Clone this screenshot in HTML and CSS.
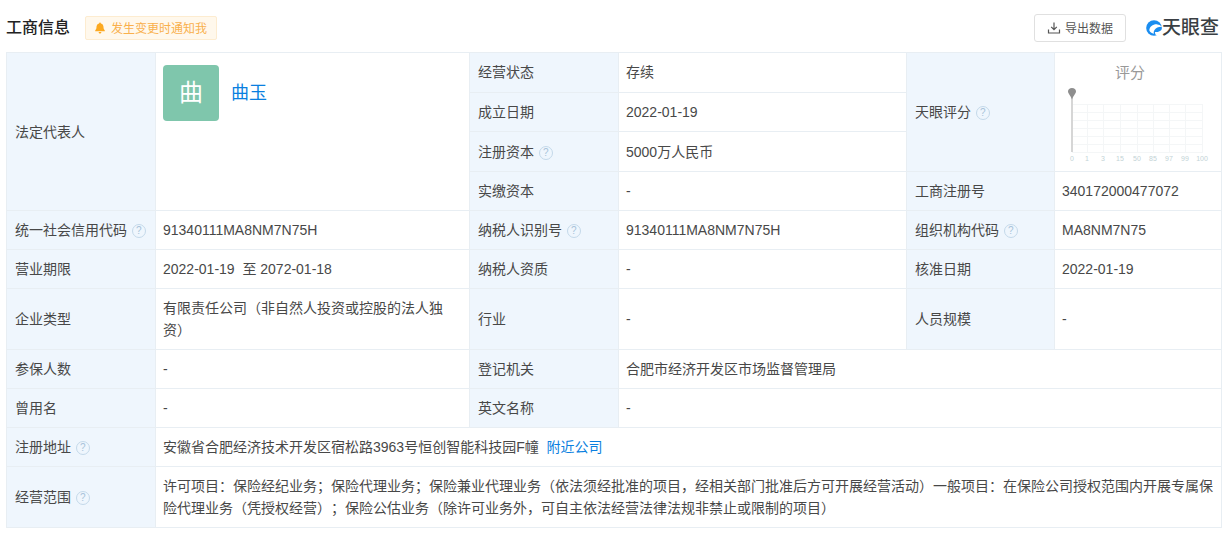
FILE: index.html
```html
<!DOCTYPE html>
<html lang="zh">
<head>
<meta charset="utf-8">
<title>工商信息</title>
<link rel="stylesheet" href="styles.css">
</head>
<body>
<header class="head">
  <h2 class="title">工商信息</h2>
  <div class="notice">
    <svg class="bell" viewBox="0 0 12 12"><path d="M6 .5c.6 0 .9.3.9.9 1.800.4 2.600 1.900 2.600 3.700 0 1.700.6 2.700 1.300 3.300v.9H1.200v-.9c.7-.6 1.300-1.600 1.300-3.300 0-1.800.8-3.300 2.600-3.700 0-.6.3-.9.9-.9zM4.600 10h2.800c0 .9-.6 1.500-1.400 1.500S4.600 10.900 4.600 10z"/></svg>
    <span>发生变更时通知我</span>
  </div>
  <div class="spacer"></div>
  <button class="export">
    <svg class="dl" viewBox="0 0 14 14"><path d="M7 1.500v7M4.200 5.800 7 8.600l2.800-2.800M1.500 8.500v3.500h11V8.500" fill="none" stroke="#555" stroke-width="1.200"/></svg>
    <span>导出数据</span>
  </button>
  <div class="logo">
    <svg class="logo-mark" viewBox="0 0 18 18">
      <circle cx="8.500" cy="9" r="8.300" fill="#1a8df0"/>
      <path d="M3.500 11.500C3.800 7.500 7.500 4.800 12 5.200c1.700.2 3.300.9 4.500 1.900L18 8c-3.500-.8-7 .5-9 3.200-.8 1.200-1.200 2.800-.5 4-2.500-.4-4.500-1.700-5-3.700z" fill="#fff"/>
      <path d="M9.500 13.200c2.500.6 5.300-.4 8.500-3.400v3.800c-2 2.600-4 3.800-6 3.800-1.700-.6-2.600-2.300-2.500-4.200z" fill="#fff"/>
    </svg>
    <span class="logo-text">天眼查</span>
  </div>
</header>
<table class="info">
  <colgroup>
    <col class="c1"><col class="c2"><col class="c3"><col class="c4"><col class="c5"><col class="c6">
  </colgroup>
  <tbody>
    <tr class="r40 first">
      <th rowspan="4">法定代表人</th>
      <td rowspan="4" class="boss-cell">
        <div class="boss"><div class="avatar">曲</div><a class="boss-name">曲玉</a></div>
      </td>
      <th class="up">经营状态</th><td class="up">存续</td>
      <th rowspan="3">天眼评分 <i class="q">?</i></th>
      <td rowspan="3" class="score">
        <div class="score-title">评分</div>
        <svg class="chart" viewBox="0 0 146 76">
          <g stroke="#f4f6f7" stroke-width="1" fill="none">
            <path d="M3 17.500H134M3 25.500H134M3 33.500H134M3 41.500H134M3 49.500H134M3 57.500H134M3 65.500H134"/>
            <path d="M18.500 17V66M34.500 17V66M51.500 17V66M68.500 17V66M84.500 17V66M100.500 17V66M116.500 17V66M133.500 17V66"/>
          </g>
          <rect x="2" y="10" width="2" height="55" fill="#d6d6d6"/>
          <path d="M3 1c2.300 0 4 1.500 4 3.500S4.500 8.500 3 12.500C1.500 8.500-1 6.500-1 4.500S.7 1 3 1z" fill="#8e8e8e"/>
          <g class="ticks">
            <text x="3" y="74">0</text><text x="18" y="74">1</text><text x="34" y="74">3</text><text x="51" y="74">15</text><text x="68" y="74">50</text><text x="84" y="74">85</text><text x="100" y="74">97</text><text x="116" y="74">99</text><text x="133" y="74">100</text>
          </g>
        </svg>
      </td>
    </tr>
    <tr class="r39"><th>成立日期</th><td>2022-01-19</td></tr>
    <tr class="r40"><th>注册资本 <i class="q">?</i></th><td>5000万人民币</td></tr>
    <tr class="r39"><th>实缴资本</th><td>-</td><th>工商注册号</th><td>340172000477072</td></tr>
    <tr class="r39"><th>统一社会信用代码 <i class="q">?</i></th><td>91340111MA8NM7N75H</td><th>纳税人识别号 <i class="q">?</i></th><td>91340111MA8NM7N75H</td><th>组织机构代码 <i class="q">?</i></th><td>MA8NM7N75</td></tr>
    <tr class="r39"><th>营业期限</th><td>2022-01-19&nbsp;&nbsp;至 2072-01-18</td><th>纳税人资质</th><td>-</td><th>核准日期</th><td>2022-01-19</td></tr>
    <tr class="r61"><th>企业类型</th><td>有限责任公司（非自然人投资或控股的法人独资）</td><th>行业</th><td>-</td><th>人员规模</th><td>-</td></tr>
    <tr class="r39"><th>参保人数</th><td>-</td><th>登记机关</th><td colspan="3">合肥市经济开发区市场监督管理局</td></tr>
    <tr class="r39"><th>曾用名</th><td>-</td><th>英文名称</th><td colspan="3">-</td></tr>
    <tr class="r39"><th>注册地址 <i class="q">?</i></th><td colspan="5">安徽省合肥经济技术开发区宿松路3963号恒创智能科技园F幢 <a class="near">附近公司</a></td></tr>
    <tr class="r61"><th>经营范围 <i class="q">?</i></th><td colspan="5">许可项目：保险经纪业务；保险代理业务；保险兼业代理业务（依法须经批准的项目，经相关部门批准后方可开展经营活动）一般项目：在保险公司授权范围内开展专属保险代理业务（凭授权经营）；保险公估业务（除许可业务外，可自主依法经营法律法规非禁止或限制的项目）</td></tr>
  </tbody>
</table>
</body>
</html>
```
FILE: styles.css
```css
* { box-sizing: border-box; }
html, body { margin: 0; padding: 0; }
body {
  width: 1228px;
  height: 534px;
  overflow: hidden;
  background: #fff;
  color: #333;
  font-family: "Liberation Sans", "Noto Sans CJK SC", sans-serif;
  font-size: 13px;
  padding: 0 7px 0 6px;
  text-spacing-trim: space-all;
}
.head {
  display: flex;
  align-items: center;
  height: 52px;
  padding-top: 3px;
}
.title {
  margin: 0;
  font-size: 16px;
  font-weight: 500;
  color: #222;
  line-height: 22px;
}
.notice {
  display: flex;
  align-items: center;
  gap: 5px;
  height: 24px;
  margin-left: 15px;
  padding: 0 9px 0 8px;
  background: #fff8ec;
  border: 1px solid #fdecd0;
  border-radius: 2px;
  color: #f9b04c;
  font-size: 12px;
}
.bell { width: 12px; height: 12px; fill: #fca920; }
.spacer { flex: 1; }
.export {
  display: flex;
  align-items: center;
  justify-content: center;
  gap: 4px;
  width: 92px;
  height: 28px;
  padding: 0;
  background: #fff;
  border: 1px solid #e0e0e0;
  border-radius: 3px;
  color: #555;
  font: inherit;
  font-size: 12px;
}
.dl { width: 14px; height: 14px; }
.logo {
  display: flex;
  align-items: center;
  width: 75px;
  margin-left: 20px;
  margin-right: 0;
}
.logo-mark { width: 17px; height: 18px; flex: none; }
.logo-text {
  font-size: 19px;
  font-weight: 500;
  color: #3a3f44;
  line-height: 20px;
  white-space: nowrap;
  margin-left: -1px;
}
.info {
  width: 1215px;
  table-layout: fixed;
  border-collapse: collapse;
}
.c1 { width: 149px; }
.c2 { width: 314px; }
.c3 { width: 149px; }
.c4 { width: 288px; }
.c5 { width: 148px; }
.c6 { width: 167px; }
.info th, .info td {
  border: 1px solid #e8eef3;
  font-size: 14px;
  line-height: 22px;
  color: #484848;
  font-weight: 400;
  text-align: left;
  vertical-align: middle;
}
.info th { background: #eff6fd; padding: 0 8px; }
.info td { padding: 0 7px; }
.info .up { padding-bottom: 2px; }
.r40 { height: 40px; }
.r39 { height: 39px; }
.r61 { height: 61px; }
.info td.boss-cell { vertical-align: top; padding: 12px 7px; }
.boss { display: flex; align-items: center; gap: 12px; }
.avatar {
  display: flex;
  align-items: center;
  justify-content: center;
  width: 56px;
  height: 56px;
  background: #7fc6ac;
  border-radius: 4px;
  color: #fff;
  font-size: 24px;
}
.boss-name { font-size: 18px; color: #0a7fe0; }
.near { color: #0a7fe0; margin-left: 4px; }
.q {
  display: inline-flex;
  align-items: center;
  justify-content: center;
  width: 14px;
  height: 14px;
  margin-left: 1px;
  border: 1px solid #c4d9ea;
  border-radius: 50%;
  color: #a7c3da;
  font-size: 10px;
  font-style: normal;
  line-height: 1;
  vertical-align: 1px;
}
.info td.score { padding: 0; vertical-align: top; }
.score-title { font-size: 15px; color: #999; line-height: 20px; margin: 10px 0 0 60px; }
.chart { display: block; width: 146px; height: 76px; margin: 4px 0 0 14px; overflow: visible; }
.ticks text { font-family: "Liberation Sans", sans-serif; font-size: 7px; fill: #c3d3d6; text-anchor: middle; }
```
